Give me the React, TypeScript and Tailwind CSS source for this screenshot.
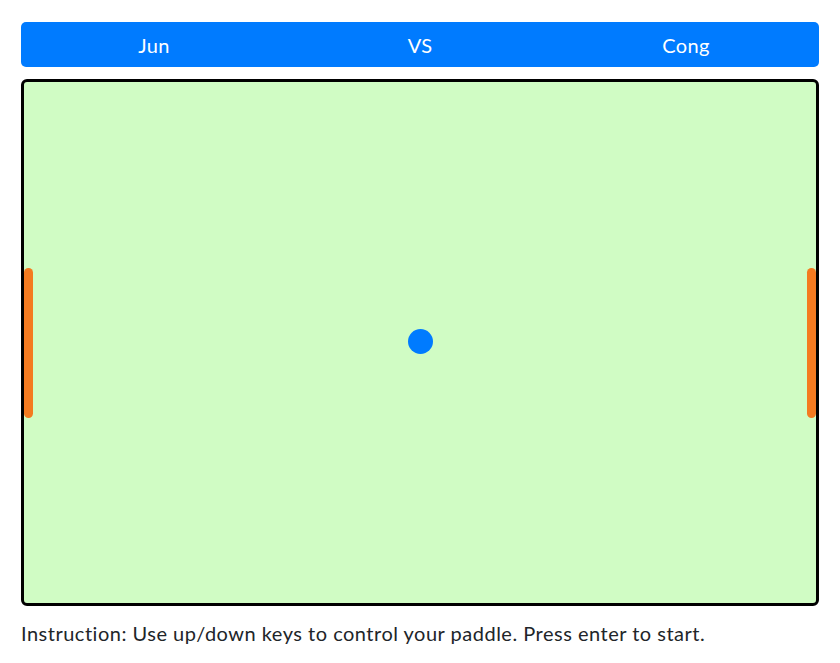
import React from 'react'

const Paddle = () => <div className="w-[9px] h-[150px] rounded-full bg-[#f47a20]" />

export default function App() {
  return (
    <div className="w-[840px] h-[663px] bg-white px-[21px] pt-[22px] font-['Lato','Liberation_Sans',sans-serif]">
      <div className="grid grid-cols-3 h-[45px] items-center rounded-[5px] bg-[#007bff] text-white text-[20px] tracking-[0.3px]">
        <div className="text-center">Jun</div>
        <div className="text-center">VS</div>
        <div className="text-center">Cong</div>
      </div>
      <div className="mt-3 h-[527px] flex items-center justify-between border-[3px] border-black rounded-[6px] bg-[#d0fcc4]">
        <Paddle />
        <div className="w-[25px] h-[25px] mb-[3px] rounded-full bg-[#007bff]" />
        <Paddle />
      </div>
      <div className="mt-[12px] text-[20px] text-[#212529] leading-[30px] tracking-[0.5px]">
        Instruction: Use up/down keys to control your paddle. Press enter to start.
      </div>
    </div>
  )
}
